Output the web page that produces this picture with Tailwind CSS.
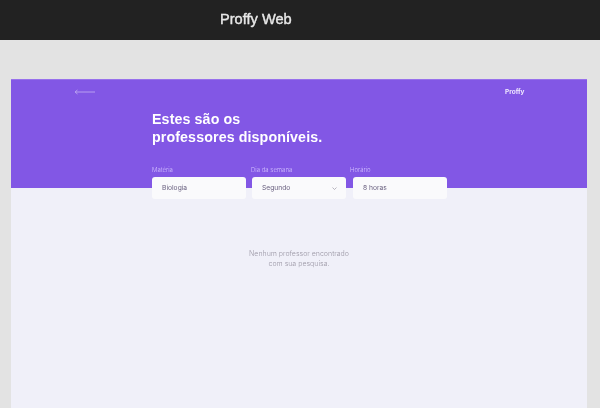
<!DOCTYPE html>
<html lang="en">
<head>
    <meta charset="UTF-8">
    <title>Proffy Web</title>
    <script src="https://cdn.jsdelivr.net/npm/@tailwindcss/browser@4"></script>
</head>
<body class="h-[408px] overflow-hidden bg-[#e3e3e3] antialiased font-['Liberation_Sans',sans-serif]">

    <!-- Top bar -->
    <header class="h-10 bg-[#222222] pl-[220px] flex items-center">
        <h1 class="text-[14.6px] font-normal text-[#e8e8e8] [-webkit-text-stroke:0.4px_#e8e8e8] [will-change:transform]">Proffy Web</h1>
    </header>

    <!-- App frame -->
    <main class="mt-[39px] mx-[11px] h-[329px] w-[576px] bg-[#f0f0f9]">

        <!-- Purple header -->
        <section class="h-[109px] bg-[#8257e5] border-t border-[#9871ec] relative">
            <div class="flex justify-between items-center pl-[63px] pr-[62px] pt-[7px] h-[17px]">
                <svg width="21" height="6" viewBox="0 0 21 6" fill="none" stroke="#b79ff0" stroke-width="1">
                    <path d="M1 3H21M3.5 1L1 3L3.5 5"/>
                </svg>
                <span class="text-[6.5px] font-bold leading-none text-[#f0e9ff] font-['Inter',sans-serif] [will-change:transform]">Proffy</span>
            </div>
            <h2 class="ml-[141px] mt-[14px] text-[14.25px] leading-[17.5px] font-bold text-white tracking-[0.1px] [will-change:transform]">Estes são os<br>professores disponíveis.</h2>

            <!-- Filters -->
            <form class="ml-[141px] mt-[20px] flex gap-[6.3px] font-['Inter',sans-serif]">
                <label class="w-[94px] block">
                    <span class="block text-[6px] leading-[8px] font-light text-[#d4c2ff] [will-change:transform]">Matéria</span>
                    <span class="mt-[3px] h-[22px] rounded-[3px] bg-[#fafafc] flex items-center pl-[10px] text-[6.7px] text-[#6a6180]"><span class="[will-change:transform]">Biologia</span></span>
                </label>
                <label class="w-[94px] block">
                    <span class="block -ml-px text-[6px] leading-[8px] font-light text-[#d4c2ff] [will-change:transform]">Dia da semana</span>
                    <span class="mt-[3px] h-[22px] rounded-[3px] bg-[#fafafc] flex items-center justify-between pl-[10px] pr-[9px] text-[6.7px] text-[#6a6180]"><span class="[will-change:transform]">Segundo</span>
                        <svg width="5" height="3" viewBox="0 0 5 3" fill="none" stroke="#9c98a6" stroke-width="0.7"><path d="M0.5 0.5L2.5 2.5L4.5 0.5"/></svg>
                    </span>
                </label>
                <label class="w-[94px] block">
                    <span class="block -ml-[3px] text-[6px] leading-[8px] font-light text-[#d4c2ff] [will-change:transform]">Horário</span>
                    <span class="mt-[3px] h-[22px] rounded-[3px] bg-[#fafafc] flex items-center pl-[10px] text-[6.7px] text-[#6a6180]"><span class="[will-change:transform]">8 horas</span></span>
                </label>
            </form>
        </section>

        <!-- Empty state -->
        <p class="mt-[61px] text-center text-[7px] leading-[10px] font-light text-[#9c98a6] font-['Inter',sans-serif] [will-change:transform]">Nenhum professor encontrado<br>com sua pesquisa.</p>
    </main>
</body>
</html>
